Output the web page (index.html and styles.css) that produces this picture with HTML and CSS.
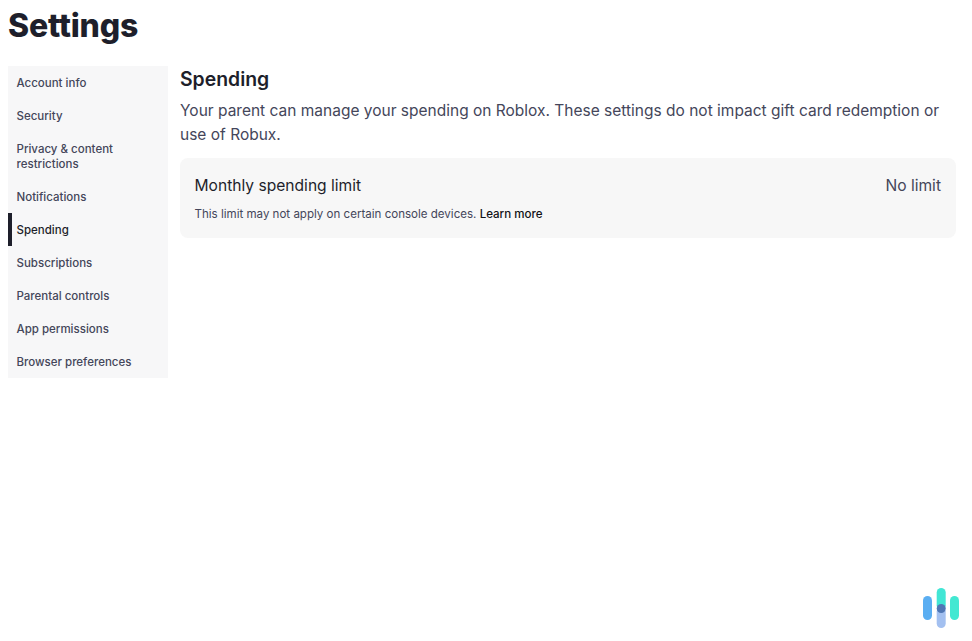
FILE: index.html
```html
<!DOCTYPE html>
<html lang="en">
<head>
    <meta charset="UTF-8">
    <meta name="viewport" content="width=device-width, initial-scale=1.0">
    <title>Settings</title>
    <link rel="stylesheet" href="styles.css">
</head>
<body>
    <h1 class="page-title">Settings</h1>
    <div class="settings">
        <ul class="side-menu">
            <li class="menu-item">Account info</li>
            <li class="menu-item">Security</li>
            <li class="menu-item">Privacy &amp; content restrictions</li>
            <li class="menu-item">Notifications</li>
            <li class="menu-item active">Spending</li>
            <li class="menu-item">Subscriptions</li>
            <li class="menu-item">Parental controls</li>
            <li class="menu-item">App permissions</li>
            <li class="menu-item">Browser preferences</li>
        </ul>
        <div class="content">
            <h2 class="section-title">Spending</h2>
            <p class="section-text">Your parent can manage your spending on Roblox. These settings do not impact gift card redemption or use of Robux.</p>
            <div class="limit-card">
                <div class="limit-row">
                    <span class="limit-name">Monthly spending limit</span>
                    <span class="limit-value">No limit</span>
                </div>
                <p class="limit-note">This limit may not apply on certain console devices. <a class="learn-more">Learn more</a></p>
            </div>
        </div>
    </div>
    <svg class="badge" width="40" height="42" viewBox="0 0 40 42">
        <rect x="1" y="9" width="9" height="24" rx="4.5" fill="#5aaef2"/>
        <rect x="14.7" y="1" width="9" height="22" rx="4.5" fill="#42e6d5"/>
        <rect x="14.7" y="20" width="9" height="21" rx="4.5" fill="#a3c0f0"/>
        <rect x="28" y="9" width="9" height="24" rx="4.5" fill="#42e8d2"/>
        <circle cx="19.2" cy="21.5" r="4.5" fill="#4f77b5"/>
    </svg>
</body>
</html>
```

FILE: styles.css
```css
body {
    font-family: Inter, "Noto Sans", sans-serif;
    background-color: white;
    margin: 0;
    padding: 8px 16px 8px 8px;
    color: #393b3d;
}
.page-title {
    font-size: 32px;
    line-height: 36px;
    font-weight: 800;
    letter-spacing: -0.2px;
    color: #1e1f2b;
    margin: 0 0 22px;
}
.settings {
    display: flex;
    align-items: flex-start;
    gap: 12px;
}
.side-menu {
    list-style: none;
    width: 160px;
    flex-shrink: 0;
    margin: 0;
    padding: 0;
    background-color: #f7f7f8;
}
.menu-item {
    padding: 10px 9px 8px 8.5px;
    font-size: 11.5px;
    line-height: 15px;
    font-weight: 500;
    color: #44465a;
}
.menu-item.active {
    color: #1e1f2b;
    padding-left: 4.5px;
    border-left: 4px solid #1e1f2b;
}
.content {
    flex: 1;
}
.section-title {
    font-size: 19.4px;
    line-height: 26px;
    font-weight: 600;
    color: #1e1f2b;
    margin: 0;
}
.section-text {
    font-size: 15.5px;
    line-height: 24px;
    margin: 7px 0 11px;
    color: #44465a;
}
.limit-card {
    background-color: #f7f7f7;
    border-radius: 8px;
    padding: 16px 15px 14px 14.5px;
    height: 80px;
    box-sizing: border-box;
}
.limit-row {
    display: flex;
    justify-content: space-between;
    font-size: 15.6px;
    line-height: 24px;
}
.limit-name {
    color: #1e1f2b;
}
.limit-value {
    color: #44465a;
}
.limit-note {
    font-size: 11.55px;
    line-height: 16px;
    margin: 8px 0 0;
    color: #44465a;
}
.learn-more {
    color: #111216;
    font-weight: 500;
}
.badge {
    position: fixed;
    right: 10px;
    bottom: 12px;
}
```
